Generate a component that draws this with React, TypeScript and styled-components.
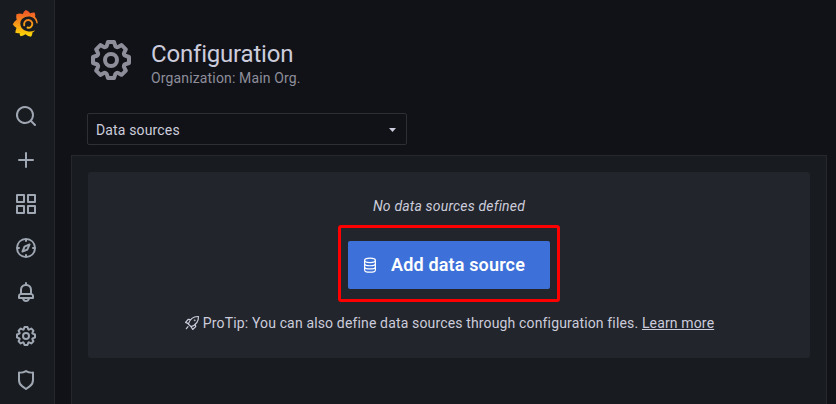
import React from 'react';
import styled, { createGlobalStyle } from 'styled-components';

const GlobalStyle = createGlobalStyle`
  *, *::before, *::after { box-sizing: border-box; }
  body {
    margin: 0;
    background: #111217;
    color: #ccccdc;
    font-family: Roboto, "Liberation Sans", sans-serif;
    font-size: 14px;
    line-height: 22px;
    letter-spacing: 0.01071em;
    overflow: hidden;
  }
`;

const Layout = styled.div`
  display: flex;
  width: 100%;
  height: 100vh;
  overflow: hidden;
`;

const Sidebar = styled.nav`
  flex: 0 0 55px;
  display: flex;
  flex-direction: column;
  align-items: center;
  padding-right: 2px;
  background: #181b1f;
  border-right: 1px solid #25272c;
`;

const Logo = styled.a`
  display: flex;
  margin-top: 9px;
  height: 85px;
  svg { width: 28px; height: 28px; }
`;

const NavItem = styled.a`
  display: flex;
  flex: 0 0 44px;
  align-items: center;
  justify-content: center;
  color: #9fa7b3;
`;

const Main = styled.main`
  flex: 1;
  display: flex;
  flex-direction: column;
  padding: 36px 9px 0 16px;
`;

const Header = styled.header`
  display: flex;
  align-items: center;
  height: 48px;
  padding-left: 16px;
  gap: 16px;
  color: #8e8e9b;
`;

const Heading = styled.div`
  display: flex;
  flex-direction: column;
  padding-top: 8px;
`;

const Title = styled.h1`
  margin: 0;
  color: #ccccdc;
  font-size: 24px;
  font-weight: 400;
  line-height: 28px;
  letter-spacing: -0.19px;
`;

const Subtitle = styled.div`
  line-height: 20px;
`;

const Select = styled.button`
  display: flex;
  align-items: center;
  justify-content: space-between;
  width: 320px;
  height: 32px;
  margin: 29px 0 10px 16px;
  padding: 2px 10px 0 8px;
  color: inherit;
  font: inherit;
  letter-spacing: inherit;
  background: #111217;
  border: 1px solid #2e2f35;
  border-radius: 2px;
`;

const Panel = styled.section`
  flex: 1;
  padding: 16px;
  background: #181b1f;
  border: 1px solid #25272c;
  border-bottom: 0;
`;

const EmptyState = styled.div`
  display: flex;
  flex-direction: column;
  align-items: center;
  height: 186px;
  padding-top: 23px;
  background: #22252b;
  border-radius: 3px;
`;

const Message = styled.em`
  line-height: 22px;
  letter-spacing: 0.18px;
`;

const Highlight = styled.div`
  display: flex;
  margin-top: 8px;
  padding: 13px 7px 10px;
  border: 3px solid #ff0000;
  border-radius: 3px;
`;

const PrimaryButton = styled.button`
  display: flex;
  align-items: center;
  gap: 12px;
  width: 202px;
  height: 48px;
  padding: 0 0 0 13px;
  color: #fff;
  font: 600 18px/48px Roboto, "Liberation Sans", sans-serif;
  letter-spacing: 0.16px;
  white-space: nowrap;
  background: #3d71d9;
  border: 0;
  border-radius: 2px;
`;

const ProTip = styled.div`
  display: flex;
  align-items: center;
  margin-top: 10px;
  white-space: pre;
  svg { margin-right: 3px; }
`;

const TipLink = styled.a`
  text-decoration: underline;
`;

const paths = {
  search:
    'M21.71,20.29,18,16.61A9,9,0,1,0,16.61,18l3.68,3.68a1,1,0,0,0,1.42,0A1,1,0,0,0,21.71,20.29ZM11,18a7,7,0,1,1,7-7A7,7,0,0,1,11,18Z',
  plus: 'M19,11H13V5a1,1,0,0,0-2,0v6H5a1,1,0,0,0,0,2h6v6a1,1,0,0,0,2,0V13h6a1,1,0,0,0,0-2Z',
  apps: 'M10,13H3a1,1,0,0,0-1,1v7a1,1,0,0,0,1,1h7a1,1,0,0,0,1-1V14A1,1,0,0,0,10,13ZM9,20H4V15H9ZM21,2H14a1,1,0,0,0-1,1v7a1,1,0,0,0,1,1h7a1,1,0,0,0,1-1V3A1,1,0,0,0,21,2ZM20,9H15V4h5Zm1,4H14a1,1,0,0,0-1,1v7a1,1,0,0,0,1,1h7a1,1,0,0,0,1-1V14A1,1,0,0,0,21,13Zm-1,7H15V15h5ZM10,2H3A1,1,0,0,0,2,3v7a1,1,0,0,0,1,1h7a1,1,0,0,0,1-1V3A1,1,0,0,0,10,2ZM9,9H4V4H9Z',
  compass:
    'M12,2A10,10,0,1,0,22,12,10,10,0,0,0,12,2Zm1,17.93V19a1,1,0,0,0-2,0v.93A8,8,0,0,1,4.07,13H5a1,1,0,0,0,0-2H4.07A8,8,0,0,1,11,4.07V5a1,1,0,0,0,2,0V4.07A8,8,0,0,1,19.93,11H19a1,1,0,0,0,0,2h.93A8,8,0,0,1,13,19.93ZM15.14,7.55l-5,2.12a1,1,0,0,0-.52.52l-2.12,5a1,1,0,0,0,.21,1.1,1,1,0,0,0,.7.3.93.93,0,0,0,.4-.09l5-2.12a1,1,0,0,0,.52-.52l2.12-5a1,1,0,0,0-1.31-1.31Zm-2.49,5.1-2.28,1,1-2.28,2.28-1Z',
  bell: 'M18,13.18V10a6,6,0,0,0-5-5.91V3a1,1,0,0,0-2,0V4.09A6,6,0,0,0,6,10v3.18A3,3,0,0,0,4,16v2a1,1,0,0,0,1,1H8.14a4,4,0,0,0,7.72,0H19a1,1,0,0,0,1-1V16A3,3,0,0,0,18,13.18ZM8,10a4,4,0,0,1,8,0v3H8Zm4,10a2,2,0,0,1-1.72-1h3.44A2,2,0,0,1,12,20Zm6-3H6V16a1,1,0,0,1,1-1H17a1,1,0,0,1,1,1Z',
  cog: 'M21.32,9.55l-1.89-.63.89-1.78A1,1,0,0,0,20.13,6L18,3.87a1,1,0,0,0-1.15-.19l-1.78.89-.63-1.89A1,1,0,0,0,13.5,2h-3a1,1,0,0,0-.95.68L8.92,4.57,7.14,3.68A1,1,0,0,0,6,3.87L3.87,6a1,1,0,0,0-.19,1.15l.89,1.78-1.89.63A1,1,0,0,0,2,10.5v3a1,1,0,0,0,.68.95l1.89.63-.89,1.78A1,1,0,0,0,3.87,18L6,20.13a1,1,0,0,0,1.15.19l1.78-.89.63,1.89a1,1,0,0,0,.95.68h3a1,1,0,0,0,.95-.68l.63-1.89,1.78.89A1,1,0,0,0,18,20.13L20.13,18a1,1,0,0,0,.19-1.15l-.89-1.78,1.89-.63A1,1,0,0,0,22,13.5v-3A1,1,0,0,0,21.32,9.55ZM20,12.78l-1.2.4A2,2,0,0,0,17.64,16l.57,1.14-1.1,1.1L16,17.64a2,2,0,0,0-2.79,1.16l-.4,1.2H11.22l-.4-1.2A2,2,0,0,0,8,17.64l-1.14.57-1.1-1.1L6.36,16A2,2,0,0,0,5.2,13.18L4,12.78V11.22l1.2-.4A2,2,0,0,0,6.36,8L5.79,6.89l1.1-1.1L8,6.36A2,2,0,0,0,10.82,5.2l.4-1.2h1.56l.4,1.2A2,2,0,0,0,16,6.36l1.14-.57,1.1,1.1L17.64,8a2,2,0,0,0,1.16,2.79l1.2.4ZM12,8a4,4,0,1,0,4,4A4,4,0,0,0,12,8Zm0,6a2,2,0,1,1,2-2A2,2,0,0,1,12,14Z',
  shield:
    'M19.63,3.65a1,1,0,0,0-.84-.2,8,8,0,0,1-6.22-1.27,1,1,0,0,0-1.14,0A8,8,0,0,1,5.21,3.45a1,1,0,0,0-.84.2A1,1,0,0,0,4,4.43v7.45a9,9,0,0,0,3.77,7.33l3.65,2.6a1,1,0,0,0,1.16,0l3.65-2.6A9,9,0,0,0,20,11.88V4.43A1,1,0,0,0,19.63,3.65ZM18,11.88a7,7,0,0,1-2.93,5.7L12,19.77,8.93,17.58A7,7,0,0,1,6,11.88V5.58a10,10,0,0,0,6-1.39,10,10,0,0,0,6,1.39Z',
};

type IconName = keyof typeof paths;

const Icon = ({ name, size = 24 }: { name: IconName; size?: number }) => (
  <svg width={size} height={size} viewBox="0 0 24 24" fill="currentColor" aria-hidden="true">
    <path d={paths[name]} />
  </svg>
);

const GrafanaLogo = () => (
  <svg viewBox="0 0 28 28" aria-label="Grafana">
    <defs>
      <linearGradient id="flame" gradientUnits="userSpaceOnUse" x1="0" y1="32" x2="0" y2="3">
        <stop offset="0" stopColor="#fff100" />
        <stop offset="1" stopColor="#f05a28" />
      </linearGradient>
    </defs>
    <path
      fill="url(#flame)"
      d="M25.700 14.300C25.700 12 24.800 9.500 23 7.800Q23.600 5.500 22.600 3.600Q20 3.500 18.200 4.300Q16.500 1.800 13.800 1Q11.500 2.700 10.800 5Q7.500 4 4.400 5.200Q3.800 8.300 4.700 10.800Q2 12.500 .8 15.300Q2 17.800 4.500 19Q3.300 21.500 3.300 23.700Q5.500 24.500 7.500 24Q7.500 25.700 8.600 27.300Q11.500 27 13.500 25.300Q16 27.500 19 27.700Q20.500 25.700 20.500 23.600Q22.300 22.800 23 21.300Q20 22.900 16.500 22.500C11.500 22 8.300 18.600 8.300 14.600C8.300 10.500 12 7.400 16.500 7.400C20.600 7.400 23.700 10 24.600 14.400Z"
    />
    <path
      fill="none"
      stroke="url(#flame)"
      strokeWidth="1.900"
      strokeLinecap="round"
      d="M12.200 16.400C11.600 13.300 13.600 11 16.200 11C18.900 11 20.500 13 20.300 15.200C20.100 17.800 17.700 19.400 15.500 18.500"
    />
  </svg>
);

const DatabaseIcon = () => (
  <svg width="18" height="18" viewBox="0 0 24 24" fill="none" stroke="currentColor" strokeWidth="1.600" aria-hidden="true">
    <ellipse cx="12" cy="5.700" rx="7.200" ry="3" />
    <path d="M4.800 5.700V18.500c0 1.700 3.200 3 7.200 3s7.200-1.300 7.200-3V5.700M4.800 10c0 1.700 3.200 3 7.200 3s7.200-1.300 7.200-3M4.800 14.200c0 1.700 3.200 3 7.200 3s7.200-1.300 7.200-3" />
  </svg>
);

const RocketIcon = () => (
  <svg width="16" height="16" viewBox="0 0 24 24" fill="none" stroke="currentColor" strokeWidth="1.800" strokeLinejoin="round" strokeLinecap="round" aria-hidden="true">
    <path d="M6.500 13.500C9 6 14 1.900 21.700 2.300C22 10 18 15 10.500 17.500Z" />
    <path d="M9.500 7L6.500 6.400L2.300 11L6.500 13M17 14.500L17.600 17.500L13 21.700L10.800 17.500M6 17.500L3.500 20.500" />
    <circle cx="16" cy="8" r=".5" />
  </svg>
);

const navigation: IconName[] = ['search', 'plus', 'apps', 'compass', 'bell', 'cog', 'shield'];

export default function App() {
  return (
    <>
      <GlobalStyle />
      <Layout>
        <Sidebar>
          <Logo>
            <GrafanaLogo />
          </Logo>
          {navigation.map((name) => (
            <NavItem key={name}>
              <Icon name={name} />
            </NavItem>
          ))}
        </Sidebar>
        <Main>
          <Header>
            <Icon name="cog" size={48} />
            <Heading>
              <Title>Configuration</Title>
              <Subtitle>Organization: Main Org.</Subtitle>
            </Heading>
          </Header>
          <Select>
            <span>Data sources</span>
            <svg width="7" height="4" viewBox="0 0 7 4" fill="currentColor" aria-hidden="true">
              <path d="M0 0h7L3.500 4Z" />
            </svg>
          </Select>
          <Panel>
            <EmptyState>
              <Message>No data sources defined</Message>
              <Highlight>
                <PrimaryButton>
                  <DatabaseIcon />
                  <span>Add data source</span>
                </PrimaryButton>
              </Highlight>
              <ProTip>
                <RocketIcon />
                <span>ProTip: You can also define data sources through configuration files. </span>
                <TipLink>Learn more</TipLink>
              </ProTip>
            </EmptyState>
          </Panel>
        </Main>
      </Layout>
    </>
  );
}
